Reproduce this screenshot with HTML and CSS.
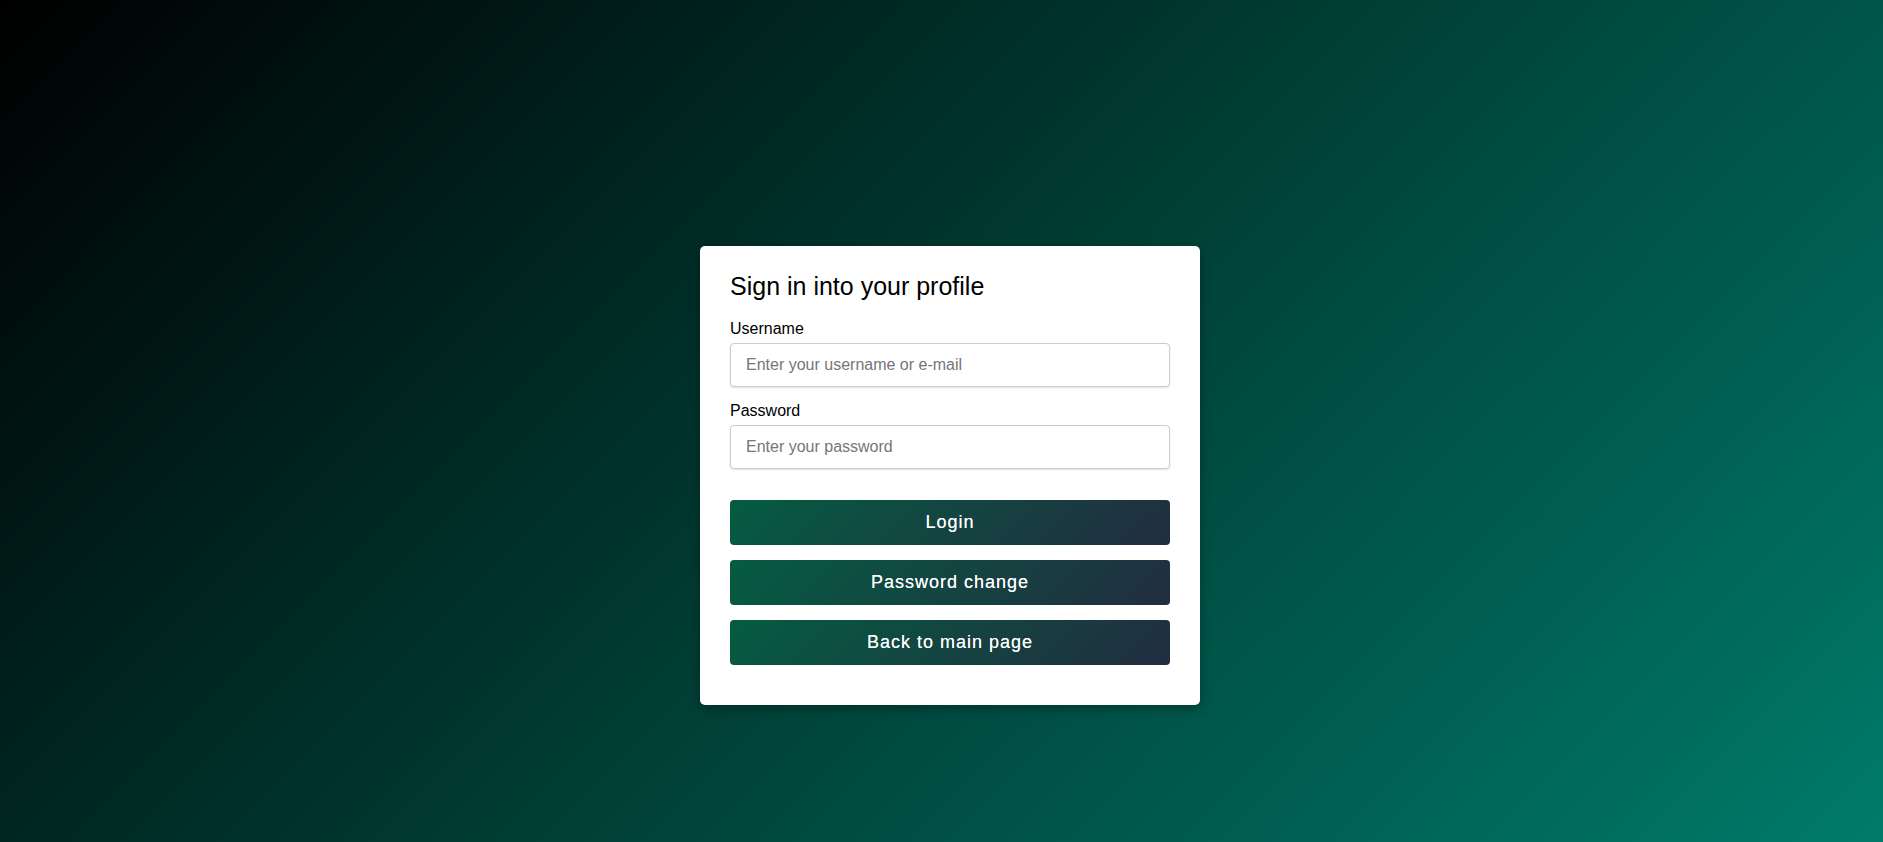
FILE: index.html
```html
<!DOCTYPE html>
<html lang="en">
<head>
<meta charset="utf-8">
<title>Sign in</title>
<link rel="stylesheet" href="styles.css">
</head>
<body>
<main class="page">
  <form class="card">
    <h1 class="card-title">Sign in into your profile</h1>
    <div class="field">
      <label class="field-label" for="username">Username</label>
      <input class="field-input" id="username" type="text" placeholder="Enter your username or e-mail">
    </div>
    <div class="field">
      <label class="field-label" for="password">Password</label>
      <input class="field-input" id="password" type="password" placeholder="Enter your password">
    </div>
    <div class="actions">
      <button class="btn" type="button">Login</button>
      <button class="btn" type="button">Password change</button>
      <button class="btn" type="button">Back to main page</button>
    </div>
  </form>
</main>
</body>
</html>
```

FILE: styles.css
```css
html, body {
  margin: 0;
  padding: 0;
  height: 100%;
}

body {
  font-family: "Liberation Sans", Arial, sans-serif;
  background: linear-gradient(135deg, #000000 0%, #007b6a 100%);
  color: #000;
}

.page {
  box-sizing: border-box;
  min-height: 100vh;
  display: flex;
  align-items: center;
  justify-content: center;
  padding: 108px 0 0 17px;
}

.card {
  box-sizing: border-box;
  width: 500px;
  background: #fff;
  border-radius: 5px;
  padding: 26px 30px 40px;
  box-shadow: 0 4px 12px rgba(0, 0, 0, 0.3);
}

.card-title {
  margin: 0 0 20px;
  font-size: 25px;
  font-weight: normal;
  line-height: 28px;
}

.field {
  margin-bottom: 15px;
}

.field-label {
  display: block;
  font-size: 16px;
  line-height: 18px;
  margin-bottom: 5px;
}

.field-input {
  box-sizing: border-box;
  display: block;
  width: 100%;
  height: 44px;
  padding: 0 15px;
  border: 1px solid #cccccc;
  border-radius: 4px;
  font-family: inherit;
  font-size: 16px;
  color: #333;
  background: #fff;
  box-shadow: 0 1px 2px rgba(0, 0, 0, 0.12);
  outline: none;
}

.field-input::placeholder {
  color: #767676;
}

.actions {
  display: flex;
  flex-direction: column;
  gap: 15px;
  margin-top: 31px;
}

.btn {
  height: 45px;
  border: none;
  border-radius: 4px;
  background: linear-gradient(135deg, #055c42 0%, #222d40 100%);
  color: #ffffff;
  font-family: inherit;
  font-size: 18px;
  letter-spacing: 1px;
  text-shadow: 0 0 0.6px rgba(255, 255, 255, 0.8);
  cursor: pointer;
}
```
